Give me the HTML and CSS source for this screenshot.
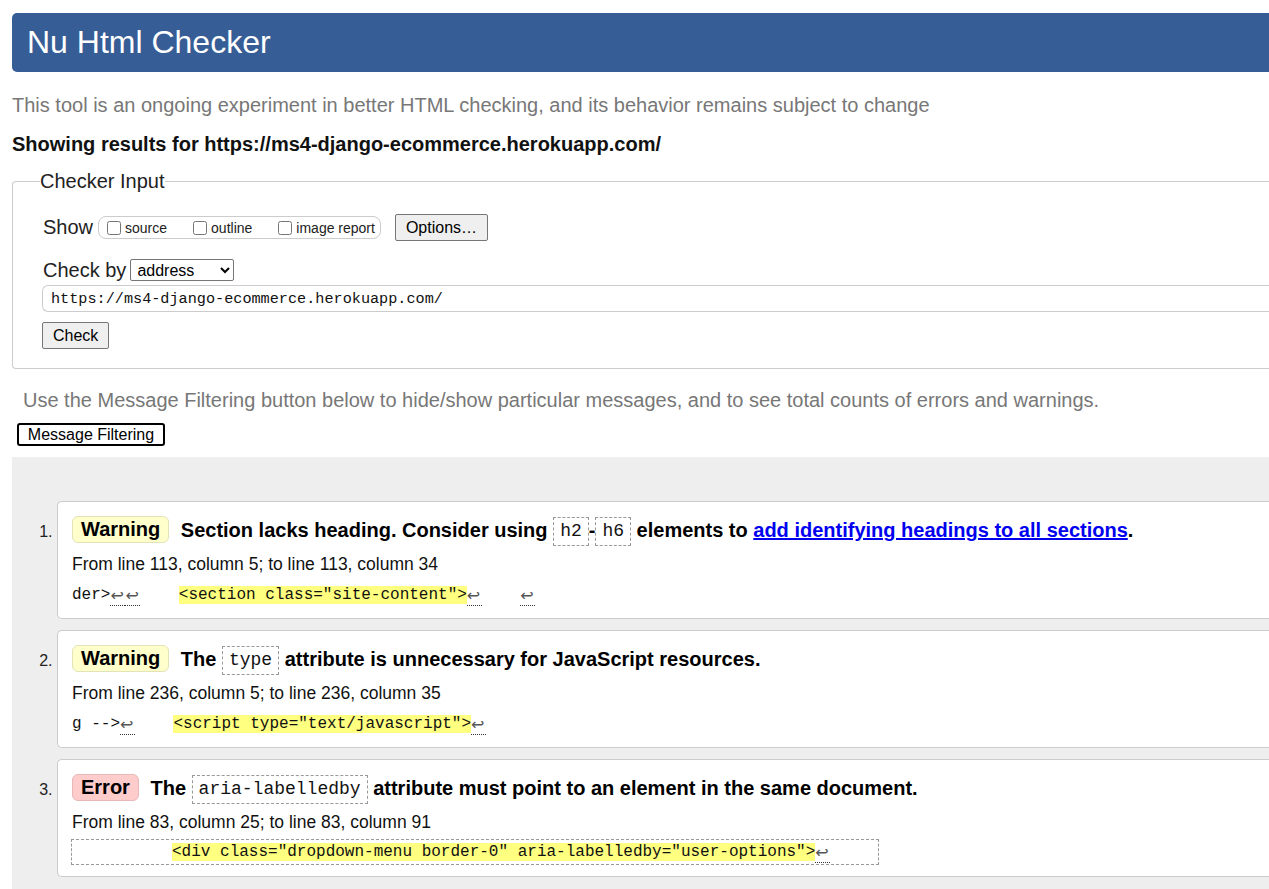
FILE: index.html
```html
<!DOCTYPE html>
<html lang="en">
<head>
<meta charset="utf-8">
<title>Nu Html Checker</title>
<link rel="stylesheet" href="styles.css">
</head>
<body>
<h1 class="title">Nu Html Checker</h1>
<p class="intro">This tool is an ongoing experiment in better HTML checking, and its behavior remains subject to change</p>
<p class="showing">Showing results for https://ms4-django-ecommerce.herokuapp.com/</p>
<fieldset class="input-box">
  <legend class="legend">Checker Input</legend>
  <div class="show-row">
    <span class="row-label">Show</span>
    <span class="check-group">
      <label class="opt"><input type="checkbox" class="cb">source</label>
      <label class="opt"><input type="checkbox" class="cb">outline</label>
      <label class="opt"><input type="checkbox" class="cb">image report</label>
    </span>
    <button class="btn options-btn">Options…</button>
  </div>
  <div class="by-row">
    <span class="row-label">Check by</span>
    <select class="sel"><option>address</option></select>
  </div>
  <div class="url">https://ms4-django-ecommerce.herokuapp.com/</div>
  <button class="btn check-btn">Check</button>
</fieldset>
<p class="filter-note">Use the Message Filtering button below to hide/show particular messages, and to see total counts of errors and warnings.</p>
<button class="filter-btn">Message Filtering</button>
<div class="results">
  <ol class="msgs">
    <li class="msg">
      <p class="msg-title"><span class="badge warn">Warning</span> Section lacks heading. Consider using <code class="kw">h2</code>-<code class="kw">h6</code> elements to <a class="link" href="#">add identifying headings to all sections</a>.</p>
      <p class="loc">From line 113, column 5; to line 113, column 34</p>
      <p class="extract">der&gt;<span class="lf">↩</span><span class="lf">↩</span>    <span class="hl">&lt;section class="site-content"&gt;</span><span class="lf">↩</span>    <span class="lf">↩</span></p>
    </li>
    <li class="msg">
      <p class="msg-title"><span class="badge warn">Warning</span> The <code class="kw">type</code> attribute is unnecessary for JavaScript resources.</p>
      <p class="loc">From line 236, column 5; to line 236, column 35</p>
      <p class="extract">g --&gt;<span class="lf">↩</span>    <span class="hl">&lt;script type="text/javascript"&gt;</span><span class="lf">↩</span></p>
    </li>
    <li class="msg">
      <p class="msg-title"><span class="badge err">Error</span> The <code class="kw">aria-labelledby</code> attribute must point to an element in the same document.</p>
      <p class="loc">From line 83, column 25; to line 83, column 91</p>
      <p class="extract boxed">          <span class="hl">&lt;div class="dropdown-menu border-0" aria-labelledby="user-options"&gt;</span><span class="lf">↩</span>     </p>
    </li>
  </ol>
</div>
</body>
</html>
```
FILE: styles.css
```css
html, body {
  overflow: hidden;
}
body {
  margin: 0;
  padding: 13px 0 0 12px;
  font-family: "Liberation Sans", Arial, sans-serif;
  color: #111;
  background: #fff;
}
.title {
  margin: 0;
  height: 59px;
  line-height: 59px;
  padding-left: 15px;
  background: #365d95;
  color: #fff;
  font-size: 32px;
  font-weight: normal;
  border-radius: 5px 0 0 5px;
}
.intro {
  margin: 22px 0 0;
  font-size: 20px;
  line-height: 23px;
  color: #777;
}
.showing {
  margin: 16px 0 0;
  font-size: 20px;
  line-height: 23px;
  font-weight: bold;
  color: #111;
}
.input-box {
  margin: 14px 0 0;
  padding: 21px 0 19px 30px;
  border: 1px solid #ccc;
  border-right: none;
  border-radius: 4px 0 0 4px;
  min-width: 0;
}
.legend {
  padding: 0;
  margin-left: -3px;
  font-size: 20px;
  line-height: 23px;
  color: #222;
}
.show-row {
  display: flex;
  align-items: center;
  height: 27px;
}
.row-label {
  font-size: 20px;
  line-height: 23px;
  color: #222;
}
.check-group {
  display: inline-flex;
  align-items: center;
  height: 21px;
  margin-left: 5px;
  padding: 0 5px 0 4px;
  border: 1px solid #ccc;
  border-radius: 8px;
  gap: 22px;
}
.opt {
  display: inline-flex;
  align-items: center;
  font-size: 14px;
  color: #222;
}
.cb {
  margin: 0 4px 0 4px;
  width: 14px;
  height: 14px;
}
.btn {
  font-family: "Liberation Sans", Arial, sans-serif;
  font-size: 16px;
  color: #000;
  background: #efefef;
  border: 1px solid #767676;
  border-radius: 2px;
  height: 27px;
  padding: 0 10px;
}
.options-btn {
  margin-left: 14px;
  width: 93px;
}
.by-row {
  display: flex;
  align-items: center;
  height: 24px;
  margin-top: 17px;
}
.sel {
  margin-left: 4px;
  width: 104px;
  height: 22px;
  font-family: "Liberation Sans", Arial, sans-serif;
  font-size: 16px;
  color: #000;
  background: #fff;
  border: 1px solid #767676;
  border-radius: 2px;
  padding: 0 2px;
}
.url {
  margin: 3px 0 0 -1px;
  height: 25px;
  line-height: 26px;
  padding-left: 8px;
  border: 1px solid #ccc;
  border-right: none;
  border-radius: 6px 0 0 6px;
  font-family: "Liberation Mono", "DejaVu Sans Mono", monospace;
  font-size: 15.2px;
  color: #111;
}
.check-btn {
  display: block;
  margin: 10px 0 0 -1px;
  width: 67px;
}
.filter-note {
  margin: 20px 0 0 11px;
  font-size: 20px;
  line-height: 23px;
  color: #777;
}
.filter-btn {
  display: block;
  margin: 11px 0 0 5px;
  height: 23px;
  width: 148px;
  padding: 0;
  background: #fff;
  border: 2px solid #000;
  border-radius: 3px;
  font-family: "Liberation Sans", Arial, sans-serif;
  font-size: 16px;
  color: #000;
}
.results {
  margin-top: 11px;
  background: #eee;
  padding: 44px 0 40px;
}
.msgs {
  margin: 0;
  padding: 0 0 0 45px;
  list-style: decimal;
}
.msg {
  background: #fff;
  border: 1px solid #ccc;
  border-right: none;
  border-radius: 5px 0 0 5px;
  padding: 13px 0 11px 14px;
  margin-bottom: 11px;
  font-size: 16px;
  color: #222;
}
.msg-title {
  margin: 0;
  height: 30px;
  font-size: 20px;
  line-height: 30px;
  font-weight: bold;
  color: #000;
}
.badge {
  display: inline-block;
  line-height: 25px;
  padding: 0 8px;
  margin-right: 6px;
  border-radius: 6px;
  vertical-align: 1px;
}
.warn {
  background: #ffffcc;
  border: 1px solid #e3e3b8;
}
.err {
  background: #ffcccc;
  border: 1px solid #e8b8b8;
}
.kw {
  display: inline-block;
  font-family: "Liberation Mono", "DejaVu Sans Mono", monospace;
  font-size: 18px;
  font-weight: normal;
  line-height: 27px;
  padding: 0 6px;
  border: 1px dashed #999;
  vertical-align: middle;
  color: #111;
}
.link {
  color: #0000ee;
  text-decoration: underline;
}
.loc {
  margin: 9px 0 0;
  font-size: 17.5px;
  line-height: 20px;
  color: #111;
}
.extract {
  margin: 9px 0 0;
  height: 24px;
  font-family: "Liberation Mono", "DejaVu Sans Mono", monospace;
  font-size: 16px;
  line-height: 24px;
  white-space: pre;
  color: #111;
}
.boxed {
  display: inline-block;
  height: 24px;
  margin-top: 7px;
  margin-left: -1px;
  padding: 0 0 0 4px;
  border: 1px dashed #999;
}
.hl {
  background: #ffff80;
}
.lf {
  display: inline-block;
  width: 15px;
  line-height: 18px;
  font-family: "DejaVu Sans", sans-serif;
  font-size: 16px;
  color: #555;
  border-bottom: 1px dotted #333;
  text-align: left;
  vertical-align: -2px;
}
```
